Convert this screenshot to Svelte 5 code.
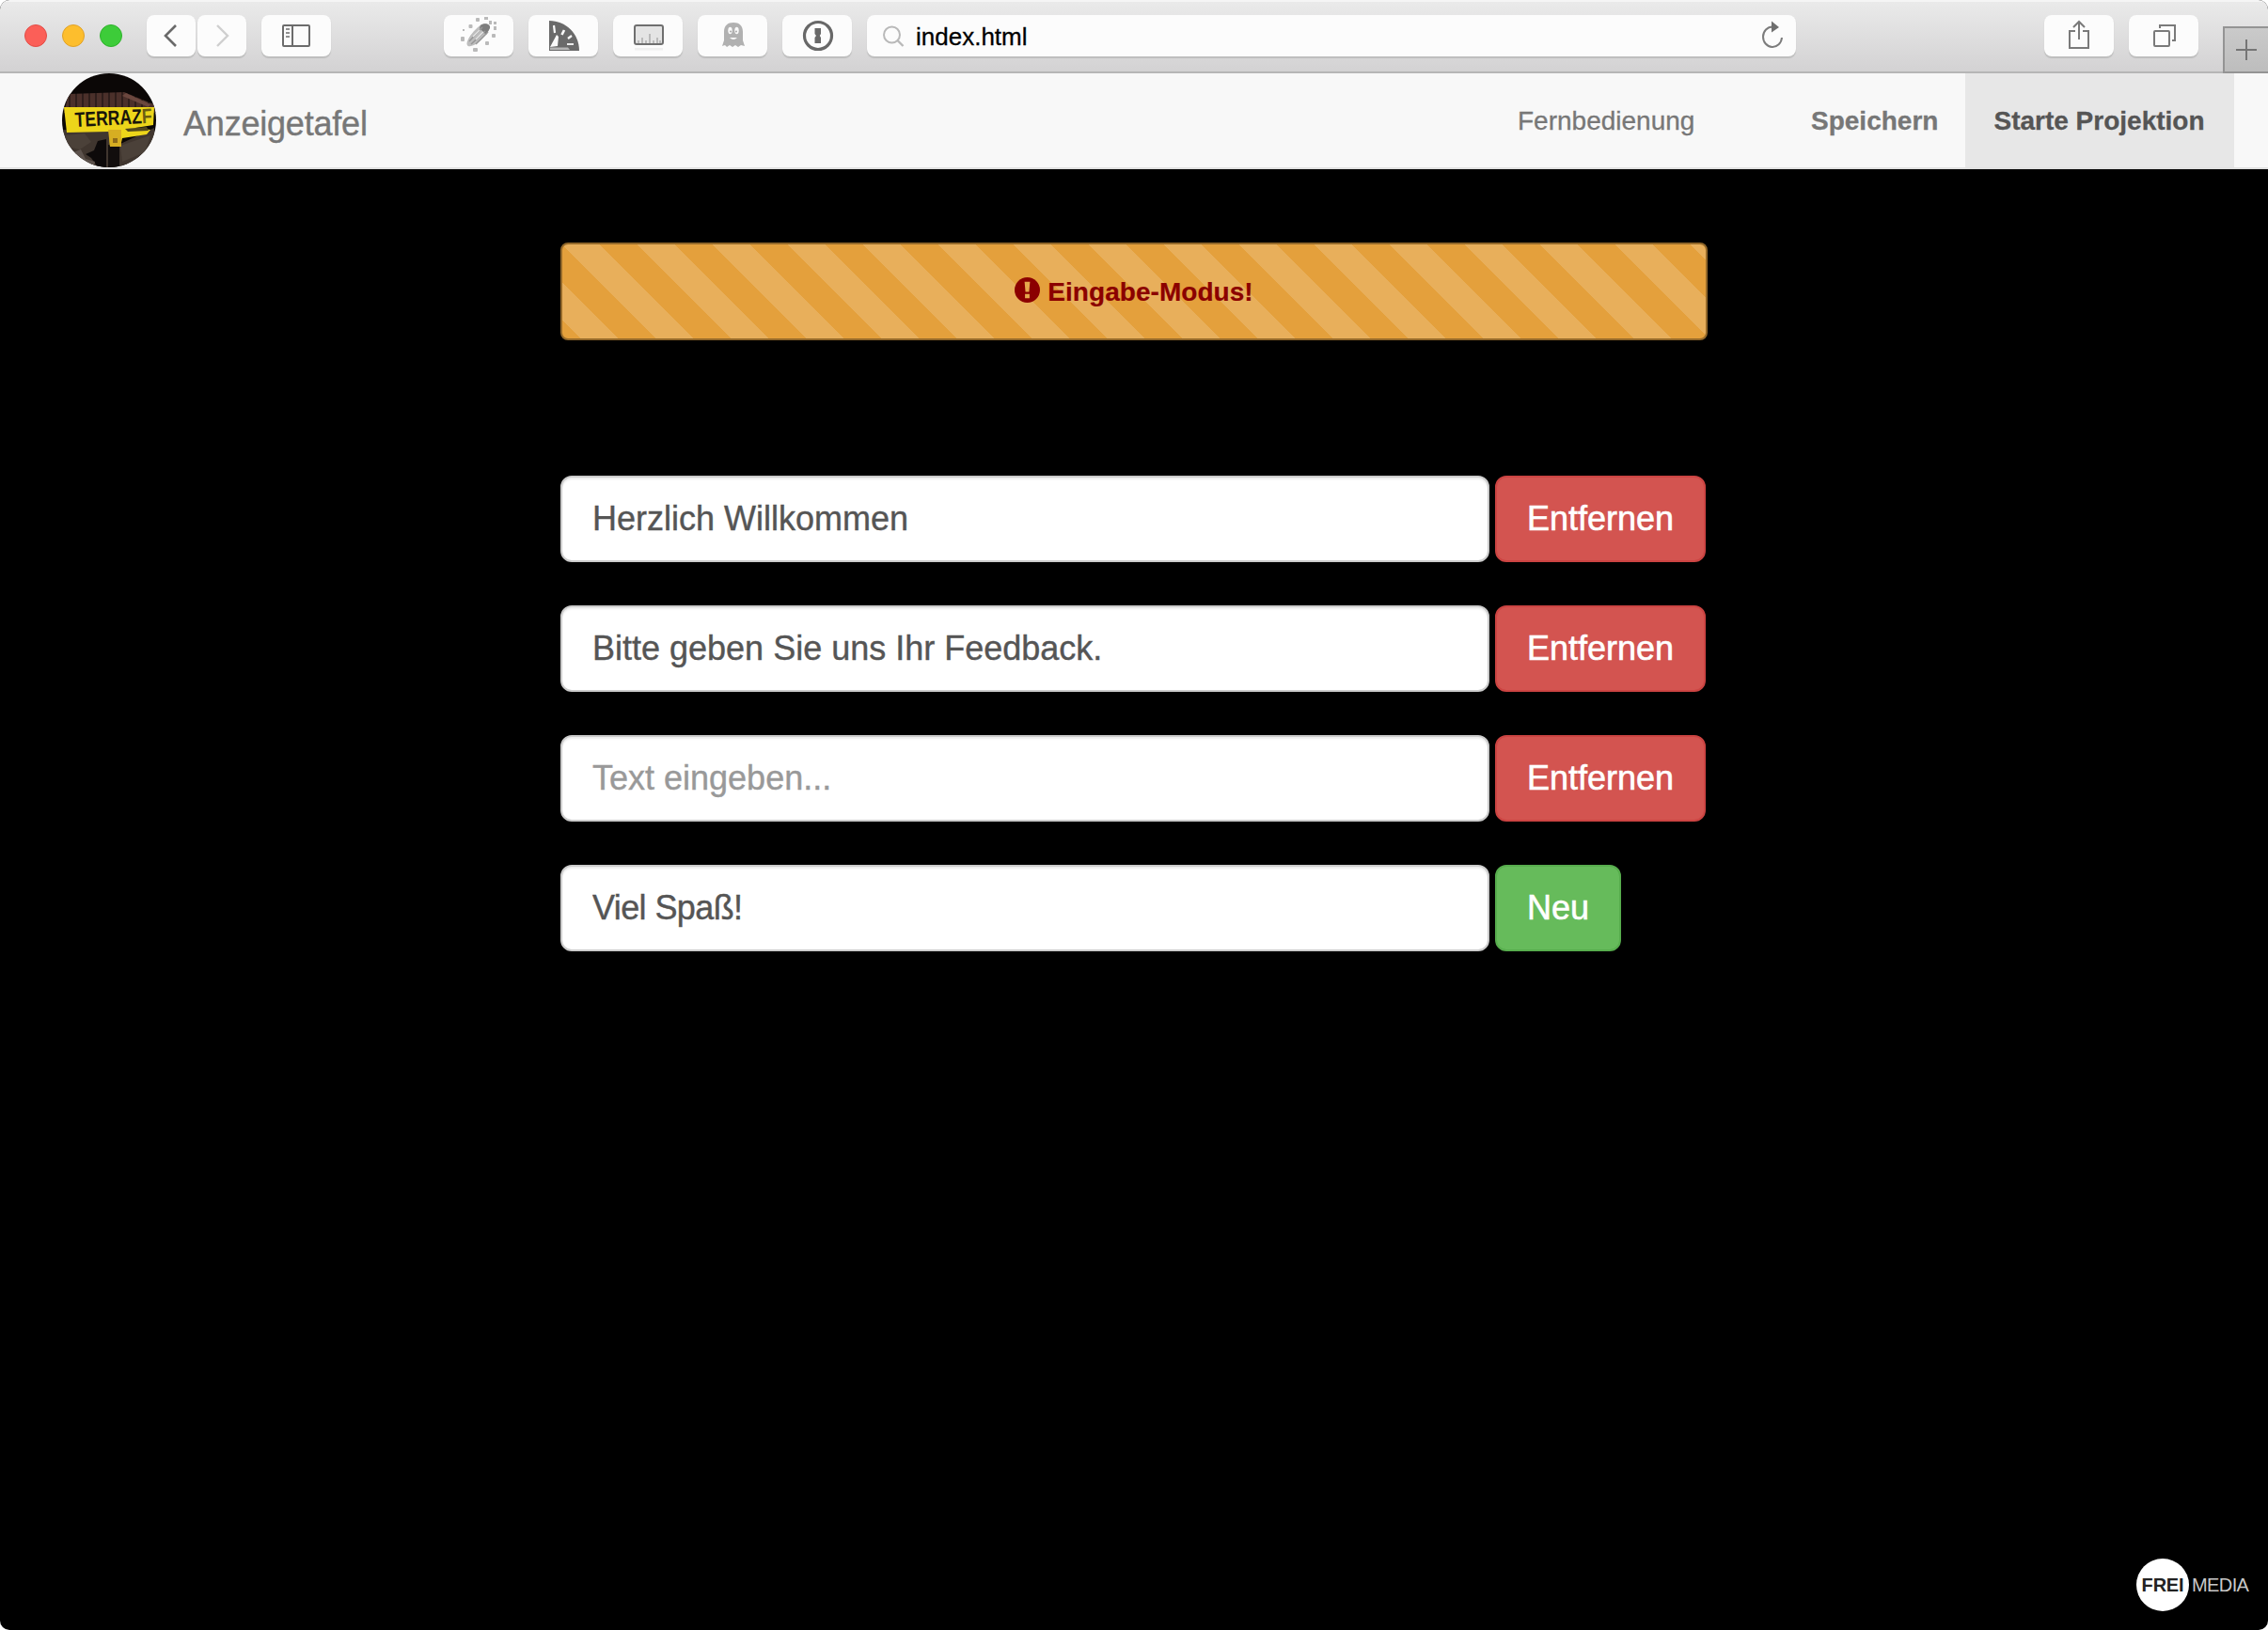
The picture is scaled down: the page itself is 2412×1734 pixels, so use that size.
<script>
  let rows = $state([
    { text: 'Herzlich Willkommen', last: false },
    { text: 'Bitte geben Sie uns Ihr Feedback.', last: false },
    { text: '', last: false },
    { text: 'Viel Spaß!', last: true }
  ]);

  function act(i) {
    if (rows[i].last) rows.splice(i, 0, { text: '', last: false });
    else rows.splice(i, 1);
  }
</script>

<div class="window">
  <header class="toolbar">
    <div class="lights">
      <i class="light red"></i><i class="light yellow"></i><i class="light green"></i>
    </div>
    <div class="history">
      <div class="tool narrow">
        <svg width="52" height="44" viewBox="0 0 52 44"><path d="M31 11 20 22 31 33" fill="none" stroke="#6a6a6a" stroke-width="2.6" /></svg>
      </div>
      <div class="tool narrow">
        <svg width="52" height="44" viewBox="0 0 52 44"><path d="M21 11 32 22 21 33" fill="none" stroke="#cfcfcf" stroke-width="2.4" /></svg>
      </div>
    </div>
    <div class="tool sidebar">
      <svg width="74" height="44" viewBox="0 0 74 44" fill="none" stroke="#6c6c6c" stroke-width="2">
        <rect x="23" y="11" width="28" height="22" rx="1" /><path d="M33 11V33" /><path d="M26 15h4M26 19h4M26 23h4" stroke-width="1.4" />
      </svg>
    </div>
    <div class="extensions">
      <div class="tool">
        <svg width="74" height="44" viewBox="0 0 74 44">
          <path d="M25 28C23 34 28 34 32 32C38 29 44 23 48 16C50 10 44 8 40 10C34 14 27 22 25 28Z" fill="#bdbdbd" />
          <path d="M39 11C43 8 50 9 49 14L45 21 38 14Z" fill="#7d7d7d" />
          <path d="M27 28 41 13M29 31 44 17M34 31 47 18" stroke="#979797" stroke-width="1.5" />
          <path d="M31 23 38 16M34 26 42 18" stroke="#e8e8e8" stroke-width="1.4" />
          <g fill="#bababa">
            <rect x="26.500" y="10" width="4" height="4" rx="1" /><rect x="34" y="3" width="4" height="4" rx="1" /><rect x="43" y="2" width="4" height="3" /><rect x="48" y="6" width="3" height="4" /><rect x="53" y="7" width="3" height="3" /><rect x="53" y="12" width="3" height="4" /><rect x="51" y="20" width="4" height="4" rx="1" /><rect x="44" y="28" width="4" height="4" rx="1" /><rect x="31" y="35" width="5" height="4" rx="1" /><rect x="18" y="23" width="4" height="5" rx="1" /><rect x="20" y="15" width="2" height="2" />
          </g>
        </svg>
      </div>
      <div class="tool">
        <svg width="74" height="44" viewBox="0 0 74 44">
          <path d="M22 6C40 6 54 20 54 38H22Z" fill="#6a6a6a" />
          <g stroke="#fafafa" fill="none"><path d="M27 11 28 19" stroke-width="2.200" /><path d="M38 16 35.500 21" stroke-width="2.600" /><path d="M46 22 42 25" stroke-width="2.200" /><path d="M41 31H48" stroke-width="1.800" /></g>
          <path d="M23 34 30 21 32 23 31 33Z" fill="#fafafa" />
          <path d="M23 34.500H42L44 37H23Z" fill="#b5b5b5" />
        </svg>
      </div>
      <div class="tool">
        <svg width="74" height="44" viewBox="0 0 74 44">
          <rect x="23" y="35" width="30" height="2.500" fill="#f0f0f0" />
          <rect x="23" y="11" width="30" height="20" rx="2" fill="#e4e4e4" stroke="#6f6f6f" stroke-width="2" />
          <path d="M27 30V27M31 30V24M35 30V27M39 30V20M43 30V27M47 30V24M50 30V27" stroke="#a4a4a4" stroke-width="1.300" />
        </svg>
      </div>
      <div class="tool">
        <svg width="74" height="44" viewBox="0 0 74 44">
          <path d="M28 18C28 11 32 8 38 8S48 11 48 18V27L50 33 46 32 43 34 40 32 37 34 34 32 31 34 29 32 26 33 28 27Z" fill="#b1b1b1" />
          <ellipse cx="34.500" cy="16.500" rx="2.200" ry="3.700" fill="#fafafa" /><ellipse cx="41.500" cy="16.500" rx="2.200" ry="3.700" fill="#fafafa" />
          <circle cx="35" cy="17.500" r="1" fill="#aaa" /><circle cx="41" cy="17.500" r="1" fill="#aaa" />
          <path d="M34 24H42Q38 28 34 24Z" fill="#fafafa" />
        </svg>
      </div>
      <div class="tool">
        <svg width="74" height="44" viewBox="0 0 74 44">
          <circle cx="38" cy="22" r="14.500" fill="none" stroke="#686868" stroke-width="3.200" />
          <path d="M34.500 14H41V20L39.800 22 41 24V30H34.500V24L36 22 34.500 20Z" fill="#686868" />
        </svg>
      </div>
    </div>
    <div class="address">
      <svg width="24" height="24" viewBox="0 0 24 24" fill="none" stroke="#b9b9b9" stroke-width="2"><circle cx="9.500" cy="10" r="8.500" /><path d="M15.500 16 21.500 22" stroke-width="2.400" /></svg>
      <span>index.html</span>
      <svg class="reload" width="26" height="32" viewBox="0 0 26 32"><path d="M13 6.500A10 10.700 0 1 0 23 18" fill="none" stroke="#7c7c7c" stroke-width="2" /><path d="M12 .500 20 7 12 12.500Z" fill="#6f6f6f" /></svg>
    </div>
    <div class="window-tools">
      <div class="tool">
        <svg width="74" height="44" viewBox="0 0 74 44" fill="none" stroke="#7a7a7a" stroke-width="2"><path d="M33 17H27V35H47V17H41M37 26V8M31 13 37 7 43 13" /></svg>
      </div>
      <div class="tool">
        <svg width="74" height="44" viewBox="0 0 74 44" fill="none" stroke="#7a7a7a" stroke-width="2"><rect x="27" y="17" width="16" height="16" rx="1" /><path d="M33 14V11H49V27H46" /></svg>
      </div>
    </div>
    <div class="new-tab">
      <svg width="46" height="48" viewBox="0 0 46 48"><path d="M12 23H34M23 12V34" stroke="#757575" stroke-width="2" /></svg>
    </div>
  </header>

  <nav>
    <svg class="logo" width="100" height="100" viewBox="0 0 100 100">
      <defs>
        <clipPath id="round"><circle cx="50" cy="50" r="50" /></clipPath>
        <pattern id="slats" width="7" height="20" patternUnits="userSpaceOnUse"><rect width="7" height="20" fill="#4b302a" /><rect width="2" height="20" fill="#2f1e1b" /></pattern>
      </defs>
      <g clip-path="url(#round)">
        <rect width="100" height="100" fill="#0b0706" />
        <path d="M7 22 66 20 100 34V42H2Z" fill="url(#slats)" />
        <path d="M68 21 94 33 92 36 64 24Z" fill="#6b473e" />
        <path d="M0 60 50 62 60 76 98 58V100H0Z" fill="#40362f" />
        <path d="M38 72 47 70V100H38L31 90 25 86 34 82Z" fill="#0d0a0a" />
        <path d="M4 66 24 64 31 73 19 81 5 78ZM62 77 94 66 88 84 64 94Z" fill="#4b4139" />
        <path d="M12 84 20 81 25 91 35 94 34 99 22 96Z" fill="#5c524c" />
        <path d="M49 76H61V100H49Z" fill="#120e0d" />
        <path d="M2 36H98L97 55 78 58 94 60 90 65 64 69 62 78H51L50 62 5 63Z" fill="#edd51a" />
        <path d="M49 60H63V78H51Z" fill="#d7ae22" />
        <path d="M67 59 90 57 92 61 70 62Z" fill="#54491c" />
        <path d="M54 69H59V74H54Z" fill="#8f6b18" />
      </g>
      <text transform="translate(14 57) rotate(-3) scale(.8 1)">TERRAZ<tspan fill="#6b5d12">F</tspan></text>
    </svg>
    <span class="brand">Anzeigetafel</span>
    <div class="links">
      <a class="remote" href="#remote">Fernbedienung</a>
      <a class="save" href="#save">Speichern</a>
      <a class="active" href="#start">Starte Projektion</a>
    </div>
  </nav>

  <main>
    <div class="alert">
      <svg width="27" height="27" viewBox="0 0 28 28"><circle cx="14" cy="14" r="14" fill="#8b0000" /><path d="M11 5H17L16 16H12ZM11.500 18.500H16.500V23H11.500Z" fill="#e6a84d" /></svg>
      <strong>Eingabe-Modus!</strong>
    </div>
    <div class="rows">
      {#each rows as row, i}
        <div class="row">
          <input type="text" class:closing={row.last} bind:value={row.text} placeholder="Text eingeben..." spellcheck="false" />
          <button class:add={row.last} onclick={() => act(i)}>{row.last ? 'Neu' : 'Entfernen'}</button>
        </div>
      {/each}
    </div>
  </main>

  <footer><span class="frei">FREI</span><span class="media">MEDIA</span></footer>
</div>

<style>
  :global(body) { background: #fff; }
  * { box-sizing: border-box; }
  svg { display: block; flex: none; }
  .window {
    width: 2412px; height: 1734px; display: flex; flex-direction: column; overflow: hidden;
    background: #000; border-radius: 10px; font-family: "Liberation Sans", Arial, sans-serif; font-size: 28px;
  }
  .toolbar {
    height: 78px; flex: none; display: flex; align-items: flex-start; padding: 14px 0 0 26px;
    border-top: 2px solid #f5f5f5; border-bottom: 2px solid #b6b6b6;
    background: linear-gradient(#eaeaea, #d3d2d3);
  }
  .lights { display: flex; gap: 16px; padding-top: 10px; margin-right: 26px; }
  .light { width: 24px; height: 24px; border-radius: 50%; border: 1.5px solid; }
  .red { background: #fb5f58; border-color: #e24c46; }
  .yellow { background: #fdbe2d; border-color: #e0a127; }
  .green { background: #3dcc39; border-color: #2eb22b; }
  .tool {
    width: 74px; height: 44px; flex: none; border-radius: 8px; background: #fcfcfc; box-shadow: 0 1.5px 1px #bdbdbd;
  }
  .narrow { width: 52px; }
  .history { display: flex; gap: 2px; margin-right: 16px; }
  .sidebar { margin-right: 120px; }
  .extensions, .window-tools { display: flex; gap: 16px; }
  .window-tools { gap: 16px; }
  .address {
    width: 988px; height: 44px; margin: 0 264px 0 16px; display: flex; align-items: center; padding: 0 12px 0 17px;
    background: #fcfcfc; border-radius: 8px; box-shadow: 0 1.5px 1px #bdbdbd; color: #000; font-size: 26px;
  }
  .address svg:first-child { margin-top: 2px; }
  .address span { margin-left: 11px; line-height: 44px; padding-top: 2px; -webkit-text-stroke: .3px; }
  .reload { margin-left: auto; }
  .new-tab {
    width: 48px; height: 50px; margin: 12px 0 0 26px; background: linear-gradient(#cacaca, #bdbdbd);
    border: 2px solid #949494; border-right: 0;
  }
  nav { height: 102px; flex: none; display: flex; background: #f8f8f8; border-bottom: 2px solid #e0e0e0; padding-left: 66px; }
  .logo { font-size: 22px; font-weight: 700; fill: #19150b; }
  .brand { margin-left: 29px; font-size: 36px; line-height: 40px; padding-top: 34px; color: #777; letter-spacing: -.2px; -webkit-text-stroke: .4px; }
  .links { margin-left: auto; margin-right: 36px; display: flex; }
  a { height: 100px; line-height: 40px; padding-top: 31px; color: #777; text-decoration: none; white-space: nowrap; -webkit-text-stroke: .3px; }
  .remote { width: 312px; padding-left: 1px; }
  .save { width: 165px; padding-left: 1px; font-weight: 700; }
  .active { width: 286px; padding-right: 1px; text-align: center; background: #e7e7e7; color: #555; font-weight: 700; }
  main { width: 1220px; margin: 78px 0 0 596px; }
  .alert {
    height: 104px; display: flex; align-items: center; justify-content: center; gap: 8px;
    color: #8b0000; border: 2px solid #936829; border-radius: 8px; background-color: #e4a03c;
    background-image: linear-gradient(45deg, rgba(255,255,255,.16) 25%, transparent 25%, transparent 50%, rgba(255,255,255,.16) 50%, rgba(255,255,255,.16) 75%, transparent 75%);
    background-size: 80px 80px;
  }
  .alert svg { margin-top: -4px; }
  .alert strong { padding-top: 1px; letter-spacing: .05px; -webkit-text-stroke: .2px; }
  .rows { margin-top: 144px; display: flex; flex-direction: column; gap: 46px; }
  .row { display: flex; gap: 6px; height: 92px; }
  input {
    width: 988px; height: 92px; padding: 0 32px; border: 2px solid #ccc; border-radius: 12px; background: #fff;
    box-shadow: inset 0 2px 2px rgba(0,0,0,.075); color: #555; font: 36px "Liberation Sans", Arial, sans-serif;
    -webkit-text-stroke: .4px;
  }
  input::placeholder { color: #999; opacity: 1; }
  .closing { letter-spacing: -.6px; }
  button {
    width: 224px; height: 92px; padding: 0; border: 2px solid #cc4442; border-radius: 12px; background: #d35450;
    color: #fff; font: 36px "Liberation Sans", Arial, sans-serif; -webkit-text-stroke: .6px;
  }
  .add { width: 134px; background: #66bb5b; border-color: #57ad4d; }
  footer { margin: auto 21px 20px auto; display: flex; align-items: center; gap: 3px; font-size: 20px; }
  .frei {
    width: 56px; height: 56px; border-radius: 50%; background: #fff; color: #222; font-weight: 700; letter-spacing: -.2px;
    display: flex; align-items: center; justify-content: center;
  }
  .media { color: #c8c8c8; width: 60px; letter-spacing: -.6px; }
</style>
